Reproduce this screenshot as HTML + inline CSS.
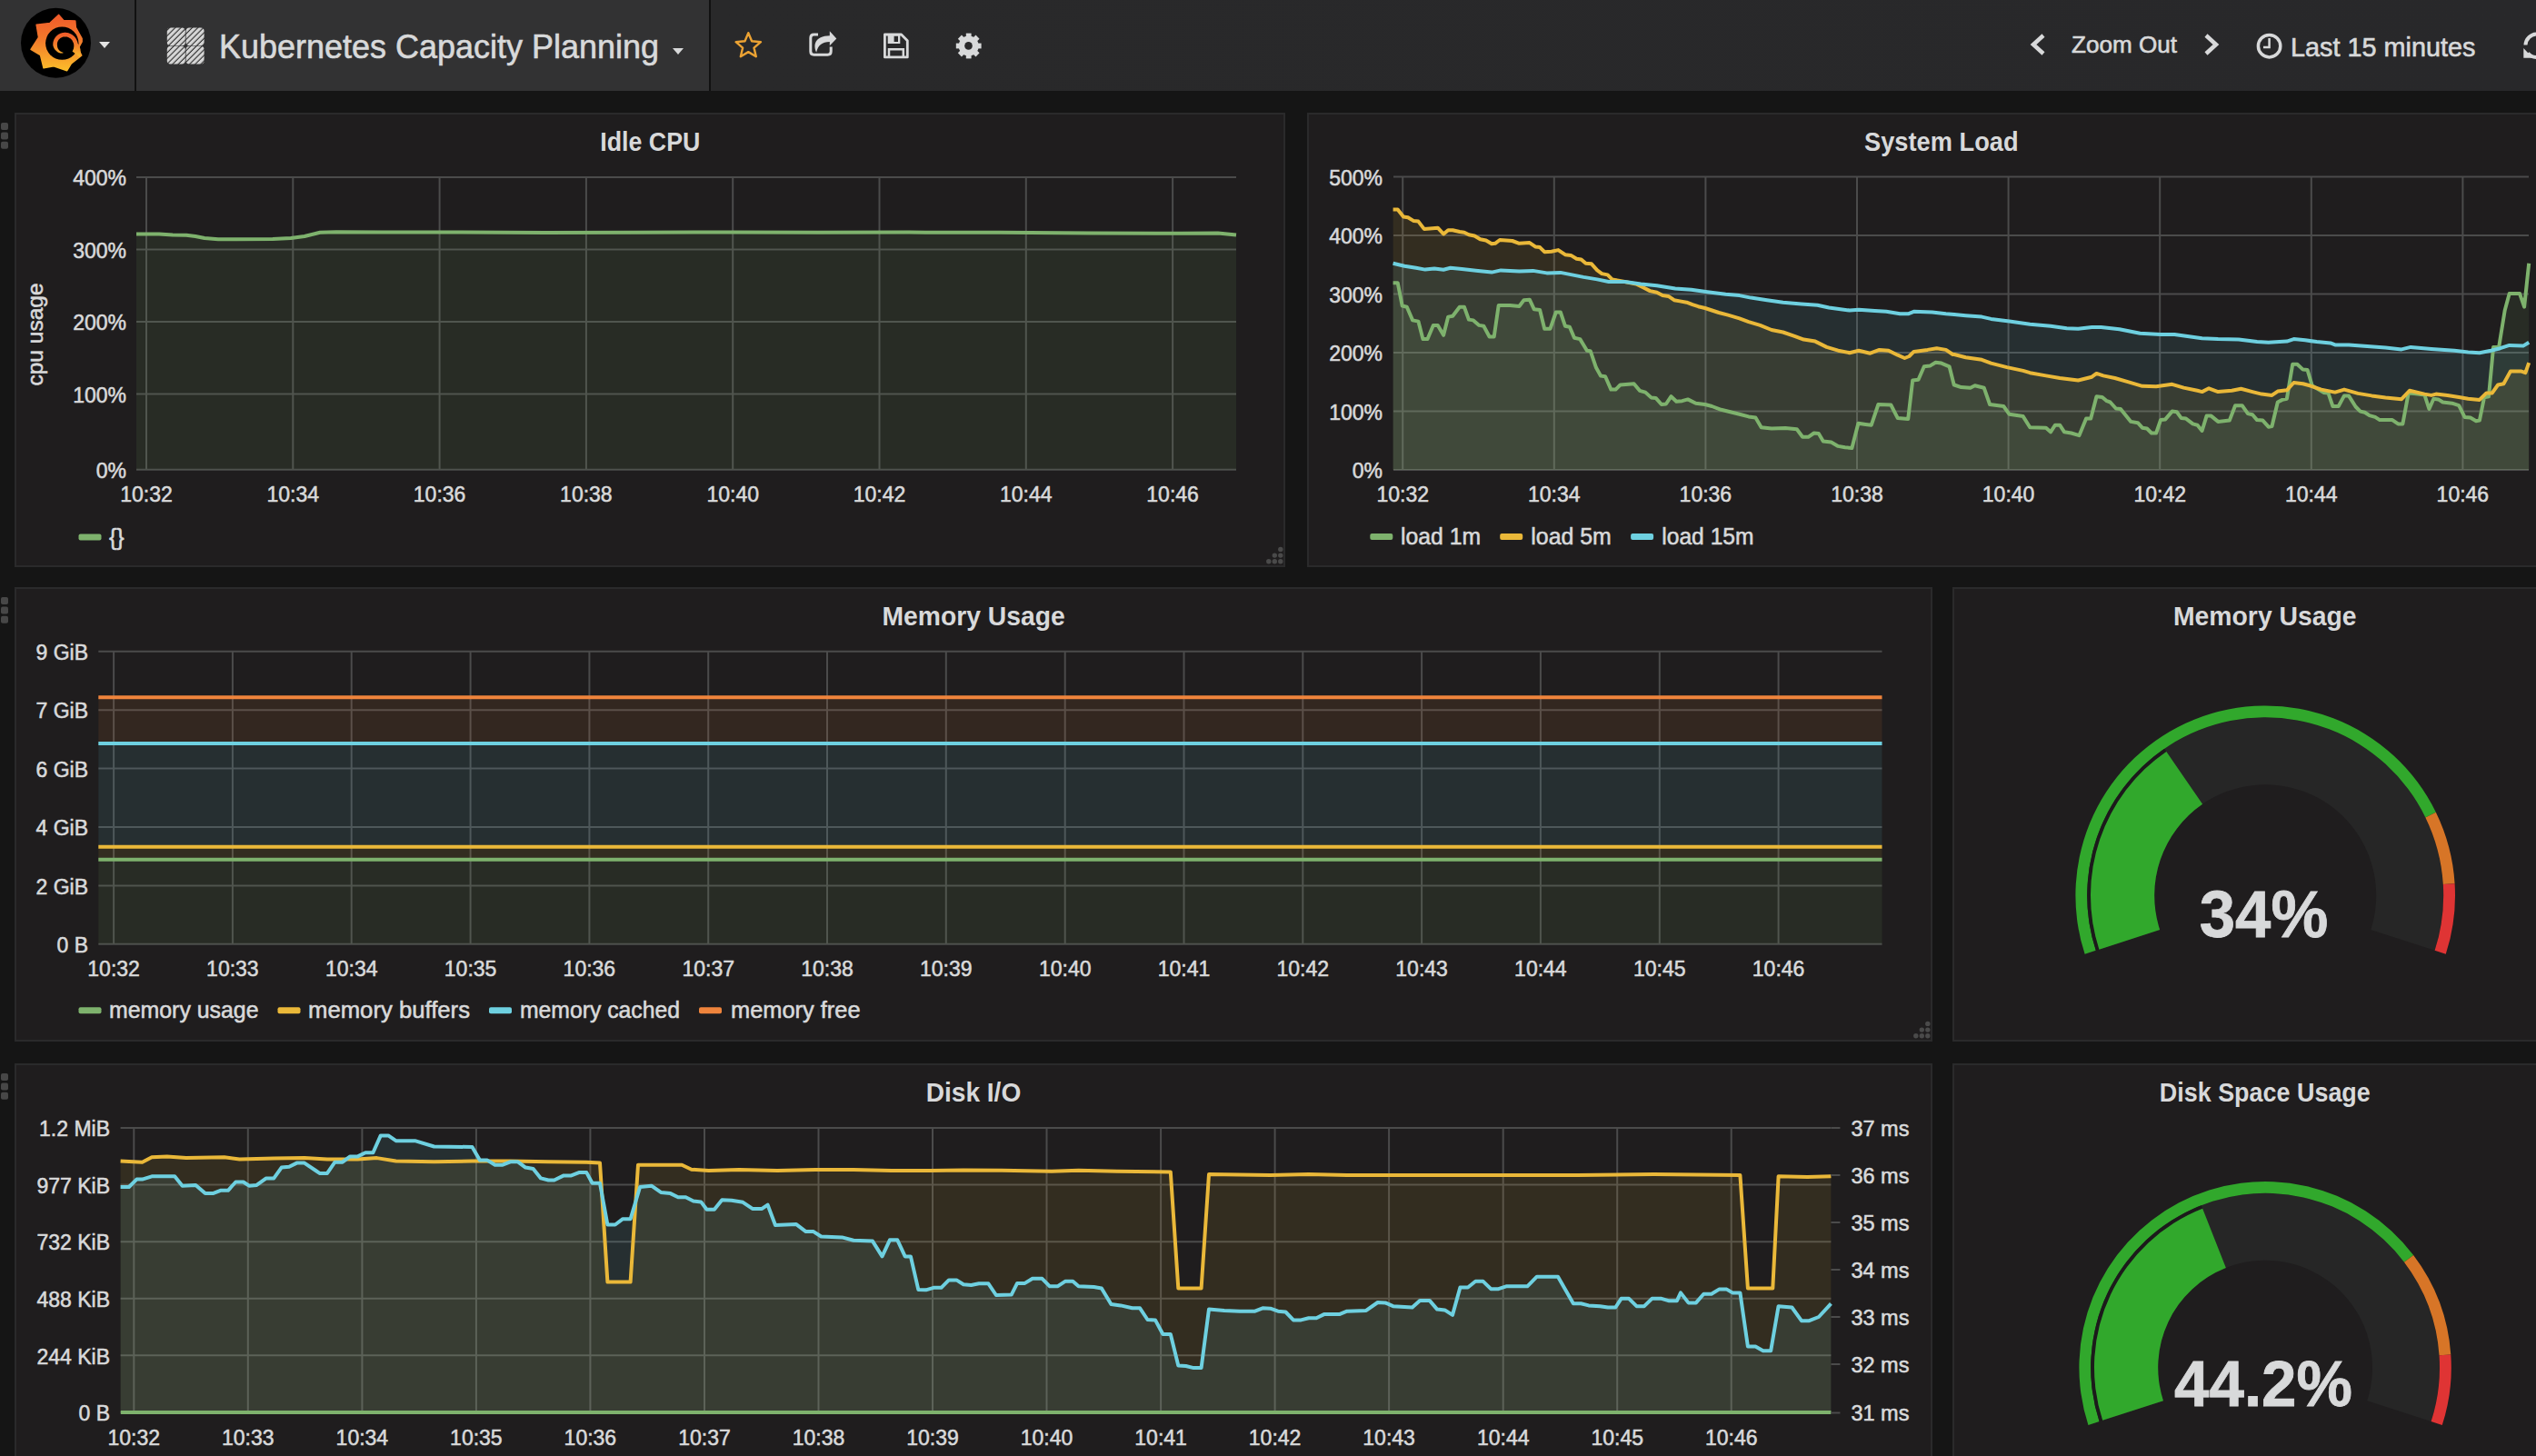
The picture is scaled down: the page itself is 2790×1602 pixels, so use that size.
<!DOCTYPE html>
<html><head><meta charset="utf-8"><title>Kubernetes Capacity Planning</title>
<style>
html,body{margin:0;padding:0;background:#151515;width:2790px;height:1602px;overflow:hidden;}
body{font-family:"Liberation Sans", sans-serif;color:#d8d9da;position:relative;}
.nav{position:absolute;left:0;top:0;width:2790px;height:100px;background:linear-gradient(to right,#323233 0px,#323233 781px,#29292a 781px,#28282a 2790px);}
.t{position:absolute;white-space:nowrap;font-family:"Liberation Sans", sans-serif;color:#d8d9da;}
svg{position:absolute;left:0;top:0;}
svg text{font-family:"Liberation Sans", sans-serif;}
</style></head><body>
<div class="nav"></div>
<svg width="2790" height="100" viewBox="0 0 2790 100">
<defs><linearGradient id="lg" x1="0" y1="0" x2="0" y2="1"><stop offset="0" stop-color="#f05a2a"/><stop offset="0.45" stop-color="#f37a2b"/><stop offset="1" stop-color="#fbbd2a"/></linearGradient></defs>
<circle cx="61.5" cy="47.3" r="38.5" fill="#000"/>
<path d="M64.7,16.4 L69.9,22.5 L82.8,23.1 L83.3,30.1 L90.1,42.4 L90.1,45.9 L86.0,53.5 L89.8,61.0 L78.4,69.8 L73.7,77.7 L59.1,72.7 L48.0,74.8 L44.5,60.5 L34.0,54.3 L42.5,41.2 L40.1,27.2 L55.0,25.4 Z" fill="url(#lg)" stroke="url(#lg)" stroke-width="1.5" stroke-linejoin="round"/>
<circle cx="68.3" cy="47.6" r="18.2" fill="#000"/>
<path d="M69.3,58.6 L68.7,58.6 L68.1,58.6 L67.5,58.6 L66.8,58.5 L66.2,58.4 L65.5,58.2 L64.9,57.9 L64.3,57.7 L63.7,57.4 L63.1,57.0 L62.5,56.6 L61.9,56.1 L61.4,55.6 L60.9,55.1 L60.4,54.5 L60.0,53.9 L59.6,53.2 L59.2,52.5 L58.9,51.8 L58.6,51.1 L58.4,50.3 L58.3,49.5 L58.3,48.7 L58.3,47.9 L58.4,47.1 L58.5,46.3 L58.7,45.5 L59.0,44.7 L59.2,43.9 L59.6,43.1 L60.0,42.4 L60.4,41.7 L60.9,41.0 L61.5,40.3 L62.1,39.7 L62.7,39.1 L63.4,38.6 L64.1,38.0 L64.8,37.6 L65.6,37.2 L66.4,36.8 L67.2,36.5 L68.1,36.3 L68.9,36.1 L69.8,35.9 L70.7,35.8 L71.6,35.8 L72.5,35.8 L73.4,35.9 L74.3,36.1 L75.2,36.3 L76.1,36.6 L77.0,36.9 L77.8,37.3 L78.7,37.7 L79.5,38.3 L80.2,38.8 L81.0,39.4 L81.7,40.1 L82.3,40.8 L82.9,41.5 L83.5,42.3 L84.0,43.2 L84.4,44.0 L84.8,44.9 L85.1,45.8 L85.4,46.8 L85.6,47.8 L86.3,48.7 L86.9,49.7 L87.4,50.8 L87.8,52.0 L88.2,53.3 L88.5,54.6 L88.6,55.9 L88.7,57.3 L88.6,58.7 L88.5,60.1 L88.2,61.6 L87.9,63.1 L79.5,56.6 L79.9,55.9 L80.2,55.3 L80.5,54.6 L80.8,53.9 L81.0,53.2 L81.1,52.5 L81.2,51.8 L81.3,51.1 L81.3,50.4 L81.3,49.7 L81.2,49.0 L81.1,48.3 L80.9,47.6 L80.7,47.0 L80.4,46.4 L80.1,45.7 L79.8,45.2 L79.5,44.6 L79.1,44.1 L78.6,43.6 L78.2,43.1 L77.7,42.6 L77.2,42.2 L76.6,41.9 L76.1,41.6 L75.5,41.3 L74.9,41.0 L74.3,40.8 L73.7,40.6 L73.1,40.5 L72.5,40.4 L71.9,40.4 L71.3,40.4 L70.7,40.4 L70.1,40.5 L69.5,40.6 L68.9,40.8 L68.4,41.0 L67.8,41.2 L67.3,41.4 L66.8,41.7 L66.3,42.0 L65.9,42.4 L65.5,42.8 L65.1,43.2 L64.7,43.6 L64.4,44.0 L64.1,44.5 L63.8,45.0 L63.6,45.5 L63.4,45.9 L63.2,46.5 L63.1,47.0 L63.0,47.5 L62.9,48.0 L62.9,48.5 L62.9,49.0 L62.9,49.5 L63.0,50.0 L63.0,50.5 L63.1,51.0 L63.1,51.5 L63.3,52.0 L63.4,52.5 L63.6,53.0 L63.8,53.4 L64.1,53.9 L64.3,54.3 L64.6,54.7 L65.0,55.1 L65.3,55.5 L65.7,55.9 L66.1,56.2 L66.5,56.5 L67.0,56.8 L67.5,57.0 L67.9,57.2 L68.4,57.4 L68.9,57.6 L69.5,57.7 Z" fill="url(#lg)"/>
<path d="M109,46 L121,46 L115,53 Z" fill="#e3e3e3"/>
<rect x="148" y="0" width="2" height="100" fill="#111"/>
<rect x="780" y="0" width="2" height="100" fill="#111"/>
<defs><pattern id="hatch" width="4.4" height="4.4" patternUnits="userSpaceOnUse" patternTransform="rotate(45)"><rect width="4.4" height="4.4" fill="#2a2a2a"/><rect width="3.3" height="4.4" fill="#d6d6d6"/></pattern></defs>
<rect x="183.8" y="30.5" width="20" height="19.7" rx="3.8" fill="url(#hatch)"/>
<rect x="204.6" y="30.5" width="20" height="19.7" rx="3.8" fill="url(#hatch)"/>
<rect x="183.8" y="50.8" width="20" height="19.7" rx="3.8" fill="url(#hatch)"/>
<rect x="204.6" y="50.8" width="20" height="19.7" rx="3.8" fill="url(#hatch)"/>
<path d="M740,53 L752,53 L746,60 Z" fill="#d8d9da"/>
<path d="M823.3,36.2 L827.1,45.3 L837.0,46.2 L829.5,52.6 L831.8,62.2 L823.3,57.1 L814.8,62.2 L817.1,52.6 L809.6,46.2 L819.5,45.3 Z" fill="none" stroke="#eba233" stroke-width="2.4" stroke-linejoin="round"/>
<path d="M900,38.1 L895.5,38.1 Q891.8,38.1 891.8,41.8 L891.8,56.6 Q891.8,60.3 895.5,60.3 L910.5,60.3 Q914.2,60.3 914.2,56.6 L914.2,51.6" fill="none" stroke="#d8d9da" stroke-width="3"/>
<path d="M898.2,57.6 C894.6,50 895.8,39.6 912.8,39.2 L912.8,34.2 L920.3,42.4 L912.8,50.2 L912.8,46 C904.5,46 899.8,50 898.2,57.6 Z" fill="#d8d9da"/>
<path d="M973.4,38 L991.6,38 L998.3,44.7 L998.3,62.9 L973.4,62.9 Z" fill="none" stroke="#d8d9da" stroke-width="2.8" stroke-linejoin="round"/>
<path d="M976.7,38.5 L990.3,38.5 L990.3,48 L976.7,48 Z M983.6,39.4 L983.6,46 L988,46 L988,39.4 Z" fill="#d8d9da" fill-rule="evenodd"/>
<path d="M978,62.9 L978,54.3 L993.8,54.3 L993.8,62.9" fill="none" stroke="#d8d9da" stroke-width="2.5"/>
<circle cx="1065.7" cy="50.5" r="11" fill="#d8d9da"/>
<rect x="1062.80" y="36.60" width="5.8" height="13.9" fill="#d8d9da" transform="rotate(0 1065.7 50.5)"/>
<rect x="1062.80" y="36.60" width="5.8" height="13.9" fill="#d8d9da" transform="rotate(45 1065.7 50.5)"/>
<rect x="1062.80" y="36.60" width="5.8" height="13.9" fill="#d8d9da" transform="rotate(90 1065.7 50.5)"/>
<rect x="1062.80" y="36.60" width="5.8" height="13.9" fill="#d8d9da" transform="rotate(135 1065.7 50.5)"/>
<rect x="1062.80" y="36.60" width="5.8" height="13.9" fill="#d8d9da" transform="rotate(180 1065.7 50.5)"/>
<rect x="1062.80" y="36.60" width="5.8" height="13.9" fill="#d8d9da" transform="rotate(225 1065.7 50.5)"/>
<rect x="1062.80" y="36.60" width="5.8" height="13.9" fill="#d8d9da" transform="rotate(270 1065.7 50.5)"/>
<rect x="1062.80" y="36.60" width="5.8" height="13.9" fill="#d8d9da" transform="rotate(315 1065.7 50.5)"/>
<circle cx="1065.5" cy="50.4" r="4.3" fill="#29292a"/>
<path d="M2248,39 L2237,49 L2248,59" fill="none" stroke="#d8d9da" stroke-width="4.5"/>
<path d="M2427,39 L2438,49 L2427,59" fill="none" stroke="#d8d9da" stroke-width="4.5"/>
<circle cx="2496.6" cy="50.7" r="12.2" fill="none" stroke="#d8d9da" stroke-width="3.5"/>
<path d="M2496.6,42 L2496.6,52 L2490,52" fill="none" stroke="#d8d9da" stroke-width="2.5"/>
<path d="M2778.5,49.5 A12.5,12.5 0 0 1 2791,37.5" fill="none" stroke="#d8d9da" stroke-width="4"/>
<path d="M2776.3,53 L2776.3,63.8 L2786.5,63.8 Z" fill="#d8d9da"/>
<path d="M2781,58.5 A12.5,12.5 0 0 0 2791,63" fill="none" stroke="#d8d9da" stroke-width="4"/>
<text x="241" y="63.8" font-size="36" fill="#d8d9da" stroke="#d8d9da" stroke-width="0.6" textLength="484" lengthAdjust="spacingAndGlyphs">Kubernetes Capacity Planning</text>
<text x="2279" y="58.4" font-size="26" fill="#d8d9da" stroke="#d8d9da" stroke-width="0.6" textLength="116" lengthAdjust="spacingAndGlyphs">Zoom Out</text>
<text x="2520" y="62.3" font-size="28.8" fill="#d8d9da" stroke="#d8d9da" stroke-width="0.6" textLength="203.5" lengthAdjust="spacingAndGlyphs">Last 15 minutes</text>
</svg>
<svg width="2790" height="1502" viewBox="0 100 2790 1502" style="top:100px">
<rect x="17" y="125" width="1396" height="498" fill="#1f1d1e" stroke="#2a2a2b" stroke-width="2"/>
<rect x="1439" y="125" width="1420" height="498" fill="#1f1d1e" stroke="#2a2a2b" stroke-width="2"/>
<rect x="17" y="647" width="2108" height="498" fill="#1f1d1e" stroke="#2a2a2b" stroke-width="2"/>
<rect x="2149" y="647" width="690" height="498" fill="#1f1d1e" stroke="#2a2a2b" stroke-width="2"/>
<rect x="17" y="1171" width="2108" height="528" fill="#1f1d1e" stroke="#2a2a2b" stroke-width="2"/>
<rect x="2149" y="1171" width="690" height="528" fill="#1f1d1e" stroke="#2a2a2b" stroke-width="2"/>
<rect x="1" y="135.0" width="8" height="8" rx="2" fill="#474747"/>
<rect x="1" y="145.4" width="8" height="8" rx="2" fill="#474747"/>
<rect x="1" y="155.8" width="8" height="8" rx="2" fill="#474747"/>
<rect x="1" y="657.0" width="8" height="8" rx="2" fill="#474747"/>
<rect x="1" y="667.4" width="8" height="8" rx="2" fill="#474747"/>
<rect x="1" y="677.8" width="8" height="8" rx="2" fill="#474747"/>
<rect x="1" y="1181.0" width="8" height="8" rx="2" fill="#474747"/>
<rect x="1" y="1191.4" width="8" height="8" rx="2" fill="#474747"/>
<rect x="1" y="1201.8" width="8" height="8" rx="2" fill="#474747"/>
<circle cx="1408.8" cy="617.8" r="2.7" fill="#4a4a4a"/>
<circle cx="1402.3" cy="617.8" r="2.7" fill="#4a4a4a"/>
<circle cx="1395.8" cy="617.8" r="2.7" fill="#4a4a4a"/>
<circle cx="1408.8" cy="611.1" r="2.7" fill="#4a4a4a"/>
<circle cx="1402.3" cy="611.1" r="2.7" fill="#4a4a4a"/>
<circle cx="1408.8" cy="604.4" r="2.7" fill="#4a4a4a"/>
<circle cx="2120.8" cy="1139.8" r="2.7" fill="#4a4a4a"/>
<circle cx="2114.3" cy="1139.8" r="2.7" fill="#4a4a4a"/>
<circle cx="2107.8" cy="1139.8" r="2.7" fill="#4a4a4a"/>
<circle cx="2120.8" cy="1133.1" r="2.7" fill="#4a4a4a"/>
<circle cx="2114.3" cy="1133.1" r="2.7" fill="#4a4a4a"/>
<circle cx="2120.8" cy="1126.4" r="2.7" fill="#4a4a4a"/>
<text x="715.3" y="166.0" font-size="29" text-anchor="middle" font-weight="700" fill="#d8d9da" textLength="110" lengthAdjust="spacingAndGlyphs">Idle CPU</text>
<text x="2135.8" y="166.0" font-size="29" text-anchor="middle" font-weight="700" fill="#d8d9da" textLength="169.6" lengthAdjust="spacingAndGlyphs">System Load</text>
<text x="1071.1" y="688.0" font-size="29" text-anchor="middle" font-weight="700" fill="#d8d9da" textLength="201.3" lengthAdjust="spacingAndGlyphs">Memory Usage</text>
<text x="2491.8" y="688.0" font-size="29" text-anchor="middle" font-weight="700" fill="#d8d9da" textLength="201.6" lengthAdjust="spacingAndGlyphs">Memory Usage</text>
<text x="1071.0" y="1212.0" font-size="29" text-anchor="middle" font-weight="700" fill="#d8d9da" textLength="104.6" lengthAdjust="spacingAndGlyphs">Disk I/O</text>
<text x="2491.8" y="1212.0" font-size="29" text-anchor="middle" font-weight="700" fill="#d8d9da" textLength="232" lengthAdjust="spacingAndGlyphs">Disk Space Usage</text>
<line x1="150" y1="195.0" x2="1360" y2="195.0" stroke="#4b4b4b" stroke-width="2"/>
<line x1="150" y1="274.5" x2="1360" y2="274.5" stroke="#4b4b4b" stroke-width="2"/>
<line x1="150" y1="354.0" x2="1360" y2="354.0" stroke="#4b4b4b" stroke-width="2"/>
<line x1="150" y1="433.5" x2="1360" y2="433.5" stroke="#4b4b4b" stroke-width="2"/>
<line x1="150" y1="516.8" x2="1360" y2="516.8" stroke="#4b4b4b" stroke-width="2"/>
<line x1="161.0" y1="195.0" x2="161.0" y2="516.8" stroke="#4b4b4b" stroke-width="2"/>
<line x1="322.3" y1="195.0" x2="322.3" y2="516.8" stroke="#4b4b4b" stroke-width="2"/>
<line x1="483.6" y1="195.0" x2="483.6" y2="516.8" stroke="#4b4b4b" stroke-width="2"/>
<line x1="644.9" y1="195.0" x2="644.9" y2="516.8" stroke="#4b4b4b" stroke-width="2"/>
<line x1="806.2" y1="195.0" x2="806.2" y2="516.8" stroke="#4b4b4b" stroke-width="2"/>
<line x1="967.5" y1="195.0" x2="967.5" y2="516.8" stroke="#4b4b4b" stroke-width="2"/>
<line x1="1128.8" y1="195.0" x2="1128.8" y2="516.8" stroke="#4b4b4b" stroke-width="2"/>
<line x1="1290.1" y1="195.0" x2="1290.1" y2="516.8" stroke="#4b4b4b" stroke-width="2"/>
<path d="M150.0,257.5 L175.0,257.5 L190.0,258.5 L205.0,258.8 L215.0,260.0 L225.0,262.0 L240.0,263.3 L260.0,263.2 L300.0,263.0 L320.0,262.0 L335.0,260.0 L352.0,255.8 L370.0,255.2 L420.0,255.5 L500.0,255.5 L600.0,256.0 L700.0,255.7 L800.0,255.5 L900.0,255.8 L1000.0,255.6 L1100.0,255.8 L1200.0,256.5 L1300.0,256.8 L1340.0,256.5 L1360.0,258.5 L1360.0,516.8 L150.0,516.8 Z" fill="#7eb26d" fill-opacity="0.1"/>
<path d="M150.0,257.5 L175.0,257.5 L190.0,258.5 L205.0,258.8 L215.0,260.0 L225.0,262.0 L240.0,263.3 L260.0,263.2 L300.0,263.0 L320.0,262.0 L335.0,260.0 L352.0,255.8 L370.0,255.2 L420.0,255.5 L500.0,255.5 L600.0,256.0 L700.0,255.7 L800.0,255.5 L900.0,255.8 L1000.0,255.6 L1100.0,255.8 L1200.0,256.5 L1300.0,256.8 L1340.0,256.5 L1360.0,258.5" fill="none" stroke="#7eb26d" stroke-width="4" stroke-linejoin="round"/>
<text x="139.0" y="204.2" font-size="23" text-anchor="end" font-weight="400" fill="#d8d9da" stroke="#d8d9da" stroke-width="0.55" >400%</text>
<text x="139.0" y="283.7" font-size="23" text-anchor="end" font-weight="400" fill="#d8d9da" stroke="#d8d9da" stroke-width="0.55" >300%</text>
<text x="139.0" y="363.2" font-size="23" text-anchor="end" font-weight="400" fill="#d8d9da" stroke="#d8d9da" stroke-width="0.55" >200%</text>
<text x="139.0" y="442.7" font-size="23" text-anchor="end" font-weight="400" fill="#d8d9da" stroke="#d8d9da" stroke-width="0.55" >100%</text>
<text x="139.0" y="526.0" font-size="23" text-anchor="end" font-weight="400" fill="#d8d9da" stroke="#d8d9da" stroke-width="0.55" >0%</text>
<text x="161.0" y="552.0" font-size="23" text-anchor="middle" font-weight="400" fill="#d8d9da" stroke="#d8d9da" stroke-width="0.55" >10:32</text>
<text x="322.3" y="552.0" font-size="23" text-anchor="middle" font-weight="400" fill="#d8d9da" stroke="#d8d9da" stroke-width="0.55" >10:34</text>
<text x="483.6" y="552.0" font-size="23" text-anchor="middle" font-weight="400" fill="#d8d9da" stroke="#d8d9da" stroke-width="0.55" >10:36</text>
<text x="644.9" y="552.0" font-size="23" text-anchor="middle" font-weight="400" fill="#d8d9da" stroke="#d8d9da" stroke-width="0.55" >10:38</text>
<text x="806.2" y="552.0" font-size="23" text-anchor="middle" font-weight="400" fill="#d8d9da" stroke="#d8d9da" stroke-width="0.55" >10:40</text>
<text x="967.5" y="552.0" font-size="23" text-anchor="middle" font-weight="400" fill="#d8d9da" stroke="#d8d9da" stroke-width="0.55" >10:42</text>
<text x="1128.8" y="552.0" font-size="23" text-anchor="middle" font-weight="400" fill="#d8d9da" stroke="#d8d9da" stroke-width="0.55" >10:44</text>
<text x="1290.1" y="552.0" font-size="23" text-anchor="middle" font-weight="400" fill="#d8d9da" stroke="#d8d9da" stroke-width="0.55" >10:46</text>
<text x="38.5" y="368.0" font-size="24.5" text-anchor="middle" font-weight="400" fill="#d8d9da" stroke="#d8d9da" stroke-width="0.55" transform="rotate(-90 38.5 368)" dy="8">cpu usage</text>
<rect x="86.5" y="587.5" width="25" height="7" rx="2" fill="#7eb26d"/>
<text x="120.0" y="599.5" font-size="25" text-anchor="start" font-weight="400" fill="#d8d9da" stroke="#d8d9da" stroke-width="0.55" >{}</text>
<line x1="1533" y1="194.6" x2="2782" y2="194.6" stroke="#4b4b4b" stroke-width="2"/>
<line x1="1533" y1="259.1" x2="2782" y2="259.1" stroke="#4b4b4b" stroke-width="2"/>
<line x1="1533" y1="323.6" x2="2782" y2="323.6" stroke="#4b4b4b" stroke-width="2"/>
<line x1="1533" y1="388.1" x2="2782" y2="388.1" stroke="#4b4b4b" stroke-width="2"/>
<line x1="1533" y1="452.5" x2="2782" y2="452.5" stroke="#4b4b4b" stroke-width="2"/>
<line x1="1533" y1="517.0" x2="2782" y2="517.0" stroke="#4b4b4b" stroke-width="2"/>
<line x1="1543.2" y1="194.6" x2="1543.2" y2="517.0" stroke="#4b4b4b" stroke-width="2"/>
<line x1="1709.8" y1="194.6" x2="1709.8" y2="517.0" stroke="#4b4b4b" stroke-width="2"/>
<line x1="1876.4" y1="194.6" x2="1876.4" y2="517.0" stroke="#4b4b4b" stroke-width="2"/>
<line x1="2043.0" y1="194.6" x2="2043.0" y2="517.0" stroke="#4b4b4b" stroke-width="2"/>
<line x1="2209.6" y1="194.6" x2="2209.6" y2="517.0" stroke="#4b4b4b" stroke-width="2"/>
<line x1="2376.2" y1="194.6" x2="2376.2" y2="517.0" stroke="#4b4b4b" stroke-width="2"/>
<line x1="2542.8" y1="194.6" x2="2542.8" y2="517.0" stroke="#4b4b4b" stroke-width="2"/>
<line x1="2709.4" y1="194.6" x2="2709.4" y2="517.0" stroke="#4b4b4b" stroke-width="2"/>
<path d="M1532.6,311.2 L1537.7,311.2 L1542.7,336.5 L1547.8,337.7 L1554.1,352.4 L1560.4,353.6 L1565.4,373.1 L1570.5,373.1 L1576.8,357.9 L1581.8,357.9 L1588.1,368.8 L1593.2,348.6 L1598.2,347.8 L1605.8,337.7 L1610.9,337.7 L1615.9,351.6 L1620.9,352.4 L1627.3,357.9 L1632.3,358.7 L1638.6,370.5 L1643.7,370.5 L1648.7,336.0 L1661.3,336.0 L1671.4,337.0 L1676.5,330.2 L1682.8,329.7 L1687.8,340.3 L1694.1,341.0 L1699.2,361.7 L1705.5,361.7 L1711.8,343.5 L1716.8,343.5 L1721.9,358.7 L1726.9,359.7 L1732.0,371.8 L1738.3,373.1 L1745.9,385.7 L1749.7,386.2 L1756.0,404.6 L1761.0,413.4 L1766.1,414.2 L1772.4,428.6 L1777.4,428.6 L1782.5,423.5 L1797.6,422.3 L1803.9,429.8 L1810.2,431.6 L1816.5,437.4 L1821.6,437.9 L1827.9,445.0 L1832.9,444.5 L1838.5,436.2 L1844.3,441.7 L1850.6,441.2 L1856.9,439.4 L1865.7,443.7 L1875.8,445.0 L1883.4,447.0 L1893.5,450.8 L1903.6,453.3 L1913.7,455.8 L1923.8,458.4 L1931.4,459.6 L1937.7,470.2 L1949.0,471.5 L1964.2,471.0 L1976.8,472.2 L1983.1,480.8 L1989.4,480.8 L1995.7,476.5 L2000.8,477.0 L2005.8,485.4 L2014.6,486.6 L2022.2,490.9 L2029.8,492.2 L2037.4,492.9 L2044.4,465.7 L2052.5,466.9 L2058.8,467.7 L2066.4,445.0 L2080.3,445.5 L2087.8,460.1 L2099.2,460.9 L2104.2,418.5 L2110.5,417.7 L2116.8,403.3 L2123.2,402.6 L2129.5,398.8 L2135.8,399.6 L2144.6,403.3 L2149.7,423.5 L2150.0,423.5 L2157.6,426.1 L2167.7,426.8 L2172.7,424.3 L2182.8,426.8 L2189.1,445.0 L2204.3,447.0 L2210.6,455.8 L2225.7,458.1 L2233.3,470.2 L2250.9,470.7 L2256.0,475.3 L2261.0,467.7 L2266.1,467.7 L2271.1,475.3 L2278.7,476.5 L2287.5,479.1 L2295.1,460.6 L2300.2,460.6 L2306.5,436.2 L2312.8,436.9 L2317.8,441.2 L2321.6,442.5 L2327.9,449.5 L2333.0,450.0 L2344.3,463.9 L2351.9,465.2 L2356.9,470.7 L2362.0,471.5 L2367.0,476.5 L2372.1,476.5 L2377.1,461.9 L2382.2,461.4 L2389.7,452.6 L2394.8,453.3 L2399.8,460.1 L2404.9,460.6 L2412.5,466.4 L2417.5,467.7 L2422.6,474.0 L2427.6,457.6 L2432.6,457.6 L2440.2,463.9 L2452.8,462.6 L2459.1,446.2 L2466.7,446.2 L2473.0,455.1 L2478.1,456.3 L2483.1,462.1 L2489.4,462.6 L2495.7,469.7 L2499.5,469.0 L2505.8,442.5 L2510.9,439.9 L2515.9,438.7 L2522.2,400.8 L2527.3,400.8 L2533.6,406.6 L2538.6,407.1 L2543.7,424.3 L2556.3,431.9 L2561.4,432.4 L2566.4,447.0 L2572.7,447.0 L2579.0,435.4 L2584.1,435.6 L2591.6,447.5 L2596.7,452.6 L2601.7,453.8 L2606.8,457.1 L2613.1,458.9 L2618.1,462.1 L2632.0,462.1 L2638.3,466.4 L2643.4,466.4 L2649.7,432.4 L2656.0,433.1 L2667.4,434.4 L2672.4,450.0 L2677.4,438.7 L2682.5,439.4 L2687.5,442.5 L2697.6,443.7 L2705.2,446.2 L2711.5,458.9 L2717.8,459.6 L2724.1,463.2 L2727.9,462.6 L2733.0,437.4 L2738.0,436.2 L2743.1,381.9 L2749.4,380.6 L2755.7,341.5 L2760.7,323.1 L2772.1,323.1 L2777.1,337.7 L2782.2,289.8 L2782.2,517.0 L1532.6,517.0 Z" fill="#7eb26d" fill-opacity="0.1"/>
<path d="M1532.6,230.5 L1537.7,230.5 L1544.0,238.5 L1549.0,239.3 L1555.3,243.1 L1560.4,243.6 L1566.7,251.9 L1573.0,251.4 L1581.8,250.7 L1588.1,257.5 L1593.2,253.2 L1598.2,253.2 L1605.8,255.0 L1610.9,255.7 L1615.9,258.2 L1622.2,259.5 L1628.5,263.3 L1634.8,264.5 L1641.1,268.3 L1644.9,267.8 L1650.0,264.0 L1663.8,265.0 L1671.4,267.8 L1682.8,267.1 L1689.1,271.4 L1694.1,272.1 L1699.2,277.2 L1706.8,276.7 L1714.3,275.1 L1721.9,280.2 L1728.2,280.9 L1734.5,284.7 L1739.6,285.5 L1744.6,289.8 L1750.9,290.3 L1757.2,297.4 L1762.3,301.1 L1768.6,302.4 L1773.6,307.4 L1787.5,310.0 L1800.1,312.5 L1807.7,316.3 L1815.3,320.1 L1822.8,321.8 L1829.1,325.1 L1835.5,325.9 L1841.8,330.2 L1848.1,331.4 L1855.6,332.7 L1862.0,335.2 L1868.3,337.2 L1875.8,339.0 L1883.4,341.5 L1891.0,344.0 L1901.1,346.6 L1913.7,350.3 L1923.8,354.1 L1936.4,357.9 L1949.0,363.0 L1961.6,365.5 L1974.3,369.8 L1984.4,373.6 L1997.0,375.6 L2009.6,381.9 L2022.2,385.7 L2034.8,388.2 L2044.9,385.7 L2057.5,388.7 L2067.6,384.9 L2077.7,385.7 L2087.8,390.7 L2095.4,394.0 L2100.4,392.0 L2105.5,386.9 L2120.6,384.9 L2130.7,383.2 L2140.8,384.9 L2148.4,390.0 L2150.0,390.0 L2162.6,393.2 L2180.3,395.8 L2190.4,399.6 L2208.0,404.1 L2225.7,407.9 L2233.3,410.2 L2250.9,413.4 L2266.1,416.0 L2276.2,417.2 L2286.3,418.5 L2296.4,416.0 L2301.4,414.7 L2306.5,410.9 L2314.0,413.4 L2326.7,416.0 L2341.8,420.3 L2356.9,424.8 L2372.1,425.3 L2389.7,422.8 L2402.4,426.6 L2417.5,429.8 L2422.6,431.1 L2430.1,427.3 L2440.2,431.1 L2455.4,429.8 L2465.5,427.8 L2478.1,431.1 L2488.2,433.6 L2499.5,434.9 L2505.8,430.6 L2515.9,429.3 L2523.5,421.0 L2533.6,422.3 L2541.2,424.3 L2553.8,428.6 L2568.9,431.6 L2579.0,428.6 L2594.2,432.9 L2609.3,435.4 L2624.4,437.4 L2642.1,439.2 L2650.9,429.8 L2667.4,433.6 L2674.9,434.9 L2680.0,433.6 L2692.6,434.9 L2705.2,436.9 L2715.3,438.7 L2727.9,439.9 L2735.5,432.4 L2741.8,432.4 L2748.1,423.5 L2754.4,422.3 L2762.0,408.4 L2773.3,408.4 L2778.4,410.2 L2782.2,399.1 L2782.2,517.0 L1532.6,517.0 Z" fill="#eab839" fill-opacity="0.1"/>
<path d="M1532.6,289.8 L1545.2,292.8 L1557.9,294.8 L1567.9,296.6 L1578.0,295.6 L1588.1,296.8 L1595.7,294.8 L1608.3,296.1 L1626.0,297.9 L1641.1,299.6 L1651.2,297.4 L1671.4,298.6 L1686.6,297.9 L1701.7,300.4 L1716.8,299.9 L1729.5,302.4 L1742.1,304.9 L1757.2,307.4 L1769.8,310.0 L1787.5,310.0 L1805.2,312.5 L1822.8,314.3 L1843.0,317.5 L1860.7,318.8 L1878.4,321.3 L1898.5,323.8 L1913.7,325.1 L1926.3,327.6 L1944.0,330.2 L1961.6,332.7 L1981.8,334.4 L1999.5,335.7 L2012.1,338.5 L2034.8,341.5 L2044.9,340.8 L2062.6,342.0 L2075.2,342.8 L2090.3,345.3 L2099.2,345.3 L2105.5,342.8 L2125.7,343.5 L2140.8,345.3 L2150.0,346.1 L2162.6,347.3 L2180.3,348.6 L2190.4,350.9 L2210.6,353.6 L2233.3,356.7 L2256.0,358.7 L2273.7,361.2 L2286.3,361.7 L2301.4,359.9 L2311.5,359.9 L2331.7,362.2 L2354.4,366.8 L2377.1,368.0 L2392.3,368.0 L2422.6,372.3 L2440.2,373.1 L2462.9,373.6 L2483.1,376.1 L2495.7,376.8 L2515.9,375.6 L2523.5,373.1 L2536.1,374.3 L2548.7,376.1 L2563.9,377.4 L2568.9,379.4 L2584.1,379.4 L2604.3,381.1 L2624.4,382.6 L2642.1,384.4 L2652.2,381.9 L2674.9,383.9 L2700.2,385.7 L2715.3,387.4 L2727.9,388.2 L2740.5,385.7 L2750.6,383.2 L2760.7,379.9 L2775.9,380.6 L2782.2,376.8 L2782.2,517.0 L1532.6,517.0 Z" fill="#6ed0e0" fill-opacity="0.1"/>
<path d="M1532.6,311.2 L1537.7,311.2 L1542.7,336.5 L1547.8,337.7 L1554.1,352.4 L1560.4,353.6 L1565.4,373.1 L1570.5,373.1 L1576.8,357.9 L1581.8,357.9 L1588.1,368.8 L1593.2,348.6 L1598.2,347.8 L1605.8,337.7 L1610.9,337.7 L1615.9,351.6 L1620.9,352.4 L1627.3,357.9 L1632.3,358.7 L1638.6,370.5 L1643.7,370.5 L1648.7,336.0 L1661.3,336.0 L1671.4,337.0 L1676.5,330.2 L1682.8,329.7 L1687.8,340.3 L1694.1,341.0 L1699.2,361.7 L1705.5,361.7 L1711.8,343.5 L1716.8,343.5 L1721.9,358.7 L1726.9,359.7 L1732.0,371.8 L1738.3,373.1 L1745.9,385.7 L1749.7,386.2 L1756.0,404.6 L1761.0,413.4 L1766.1,414.2 L1772.4,428.6 L1777.4,428.6 L1782.5,423.5 L1797.6,422.3 L1803.9,429.8 L1810.2,431.6 L1816.5,437.4 L1821.6,437.9 L1827.9,445.0 L1832.9,444.5 L1838.5,436.2 L1844.3,441.7 L1850.6,441.2 L1856.9,439.4 L1865.7,443.7 L1875.8,445.0 L1883.4,447.0 L1893.5,450.8 L1903.6,453.3 L1913.7,455.8 L1923.8,458.4 L1931.4,459.6 L1937.7,470.2 L1949.0,471.5 L1964.2,471.0 L1976.8,472.2 L1983.1,480.8 L1989.4,480.8 L1995.7,476.5 L2000.8,477.0 L2005.8,485.4 L2014.6,486.6 L2022.2,490.9 L2029.8,492.2 L2037.4,492.9 L2044.4,465.7 L2052.5,466.9 L2058.8,467.7 L2066.4,445.0 L2080.3,445.5 L2087.8,460.1 L2099.2,460.9 L2104.2,418.5 L2110.5,417.7 L2116.8,403.3 L2123.2,402.6 L2129.5,398.8 L2135.8,399.6 L2144.6,403.3 L2149.7,423.5 L2150.0,423.5 L2157.6,426.1 L2167.7,426.8 L2172.7,424.3 L2182.8,426.8 L2189.1,445.0 L2204.3,447.0 L2210.6,455.8 L2225.7,458.1 L2233.3,470.2 L2250.9,470.7 L2256.0,475.3 L2261.0,467.7 L2266.1,467.7 L2271.1,475.3 L2278.7,476.5 L2287.5,479.1 L2295.1,460.6 L2300.2,460.6 L2306.5,436.2 L2312.8,436.9 L2317.8,441.2 L2321.6,442.5 L2327.9,449.5 L2333.0,450.0 L2344.3,463.9 L2351.9,465.2 L2356.9,470.7 L2362.0,471.5 L2367.0,476.5 L2372.1,476.5 L2377.1,461.9 L2382.2,461.4 L2389.7,452.6 L2394.8,453.3 L2399.8,460.1 L2404.9,460.6 L2412.5,466.4 L2417.5,467.7 L2422.6,474.0 L2427.6,457.6 L2432.6,457.6 L2440.2,463.9 L2452.8,462.6 L2459.1,446.2 L2466.7,446.2 L2473.0,455.1 L2478.1,456.3 L2483.1,462.1 L2489.4,462.6 L2495.7,469.7 L2499.5,469.0 L2505.8,442.5 L2510.9,439.9 L2515.9,438.7 L2522.2,400.8 L2527.3,400.8 L2533.6,406.6 L2538.6,407.1 L2543.7,424.3 L2556.3,431.9 L2561.4,432.4 L2566.4,447.0 L2572.7,447.0 L2579.0,435.4 L2584.1,435.6 L2591.6,447.5 L2596.7,452.6 L2601.7,453.8 L2606.8,457.1 L2613.1,458.9 L2618.1,462.1 L2632.0,462.1 L2638.3,466.4 L2643.4,466.4 L2649.7,432.4 L2656.0,433.1 L2667.4,434.4 L2672.4,450.0 L2677.4,438.7 L2682.5,439.4 L2687.5,442.5 L2697.6,443.7 L2705.2,446.2 L2711.5,458.9 L2717.8,459.6 L2724.1,463.2 L2727.9,462.6 L2733.0,437.4 L2738.0,436.2 L2743.1,381.9 L2749.4,380.6 L2755.7,341.5 L2760.7,323.1 L2772.1,323.1 L2777.1,337.7 L2782.2,289.8" fill="none" stroke="#7eb26d" stroke-width="4" stroke-linejoin="round"/>
<path d="M1532.6,230.5 L1537.7,230.5 L1544.0,238.5 L1549.0,239.3 L1555.3,243.1 L1560.4,243.6 L1566.7,251.9 L1573.0,251.4 L1581.8,250.7 L1588.1,257.5 L1593.2,253.2 L1598.2,253.2 L1605.8,255.0 L1610.9,255.7 L1615.9,258.2 L1622.2,259.5 L1628.5,263.3 L1634.8,264.5 L1641.1,268.3 L1644.9,267.8 L1650.0,264.0 L1663.8,265.0 L1671.4,267.8 L1682.8,267.1 L1689.1,271.4 L1694.1,272.1 L1699.2,277.2 L1706.8,276.7 L1714.3,275.1 L1721.9,280.2 L1728.2,280.9 L1734.5,284.7 L1739.6,285.5 L1744.6,289.8 L1750.9,290.3 L1757.2,297.4 L1762.3,301.1 L1768.6,302.4 L1773.6,307.4 L1787.5,310.0 L1800.1,312.5 L1807.7,316.3 L1815.3,320.1 L1822.8,321.8 L1829.1,325.1 L1835.5,325.9 L1841.8,330.2 L1848.1,331.4 L1855.6,332.7 L1862.0,335.2 L1868.3,337.2 L1875.8,339.0 L1883.4,341.5 L1891.0,344.0 L1901.1,346.6 L1913.7,350.3 L1923.8,354.1 L1936.4,357.9 L1949.0,363.0 L1961.6,365.5 L1974.3,369.8 L1984.4,373.6 L1997.0,375.6 L2009.6,381.9 L2022.2,385.7 L2034.8,388.2 L2044.9,385.7 L2057.5,388.7 L2067.6,384.9 L2077.7,385.7 L2087.8,390.7 L2095.4,394.0 L2100.4,392.0 L2105.5,386.9 L2120.6,384.9 L2130.7,383.2 L2140.8,384.9 L2148.4,390.0 L2150.0,390.0 L2162.6,393.2 L2180.3,395.8 L2190.4,399.6 L2208.0,404.1 L2225.7,407.9 L2233.3,410.2 L2250.9,413.4 L2266.1,416.0 L2276.2,417.2 L2286.3,418.5 L2296.4,416.0 L2301.4,414.7 L2306.5,410.9 L2314.0,413.4 L2326.7,416.0 L2341.8,420.3 L2356.9,424.8 L2372.1,425.3 L2389.7,422.8 L2402.4,426.6 L2417.5,429.8 L2422.6,431.1 L2430.1,427.3 L2440.2,431.1 L2455.4,429.8 L2465.5,427.8 L2478.1,431.1 L2488.2,433.6 L2499.5,434.9 L2505.8,430.6 L2515.9,429.3 L2523.5,421.0 L2533.6,422.3 L2541.2,424.3 L2553.8,428.6 L2568.9,431.6 L2579.0,428.6 L2594.2,432.9 L2609.3,435.4 L2624.4,437.4 L2642.1,439.2 L2650.9,429.8 L2667.4,433.6 L2674.9,434.9 L2680.0,433.6 L2692.6,434.9 L2705.2,436.9 L2715.3,438.7 L2727.9,439.9 L2735.5,432.4 L2741.8,432.4 L2748.1,423.5 L2754.4,422.3 L2762.0,408.4 L2773.3,408.4 L2778.4,410.2 L2782.2,399.1" fill="none" stroke="#eab839" stroke-width="4" stroke-linejoin="round"/>
<path d="M1532.6,289.8 L1545.2,292.8 L1557.9,294.8 L1567.9,296.6 L1578.0,295.6 L1588.1,296.8 L1595.7,294.8 L1608.3,296.1 L1626.0,297.9 L1641.1,299.6 L1651.2,297.4 L1671.4,298.6 L1686.6,297.9 L1701.7,300.4 L1716.8,299.9 L1729.5,302.4 L1742.1,304.9 L1757.2,307.4 L1769.8,310.0 L1787.5,310.0 L1805.2,312.5 L1822.8,314.3 L1843.0,317.5 L1860.7,318.8 L1878.4,321.3 L1898.5,323.8 L1913.7,325.1 L1926.3,327.6 L1944.0,330.2 L1961.6,332.7 L1981.8,334.4 L1999.5,335.7 L2012.1,338.5 L2034.8,341.5 L2044.9,340.8 L2062.6,342.0 L2075.2,342.8 L2090.3,345.3 L2099.2,345.3 L2105.5,342.8 L2125.7,343.5 L2140.8,345.3 L2150.0,346.1 L2162.6,347.3 L2180.3,348.6 L2190.4,350.9 L2210.6,353.6 L2233.3,356.7 L2256.0,358.7 L2273.7,361.2 L2286.3,361.7 L2301.4,359.9 L2311.5,359.9 L2331.7,362.2 L2354.4,366.8 L2377.1,368.0 L2392.3,368.0 L2422.6,372.3 L2440.2,373.1 L2462.9,373.6 L2483.1,376.1 L2495.7,376.8 L2515.9,375.6 L2523.5,373.1 L2536.1,374.3 L2548.7,376.1 L2563.9,377.4 L2568.9,379.4 L2584.1,379.4 L2604.3,381.1 L2624.4,382.6 L2642.1,384.4 L2652.2,381.9 L2674.9,383.9 L2700.2,385.7 L2715.3,387.4 L2727.9,388.2 L2740.5,385.7 L2750.6,383.2 L2760.7,379.9 L2775.9,380.6 L2782.2,376.8" fill="none" stroke="#6ed0e0" stroke-width="4" stroke-linejoin="round"/>
<text x="1521.0" y="203.8" font-size="23" text-anchor="end" font-weight="400" fill="#d8d9da" stroke="#d8d9da" stroke-width="0.55" >500%</text>
<text x="1521.0" y="268.3" font-size="23" text-anchor="end" font-weight="400" fill="#d8d9da" stroke="#d8d9da" stroke-width="0.55" >400%</text>
<text x="1521.0" y="332.8" font-size="23" text-anchor="end" font-weight="400" fill="#d8d9da" stroke="#d8d9da" stroke-width="0.55" >300%</text>
<text x="1521.0" y="397.3" font-size="23" text-anchor="end" font-weight="400" fill="#d8d9da" stroke="#d8d9da" stroke-width="0.55" >200%</text>
<text x="1521.0" y="461.7" font-size="23" text-anchor="end" font-weight="400" fill="#d8d9da" stroke="#d8d9da" stroke-width="0.55" >100%</text>
<text x="1521.0" y="526.2" font-size="23" text-anchor="end" font-weight="400" fill="#d8d9da" stroke="#d8d9da" stroke-width="0.55" >0%</text>
<text x="1543.2" y="552.0" font-size="23" text-anchor="middle" font-weight="400" fill="#d8d9da" stroke="#d8d9da" stroke-width="0.55" >10:32</text>
<text x="1709.8" y="552.0" font-size="23" text-anchor="middle" font-weight="400" fill="#d8d9da" stroke="#d8d9da" stroke-width="0.55" >10:34</text>
<text x="1876.4" y="552.0" font-size="23" text-anchor="middle" font-weight="400" fill="#d8d9da" stroke="#d8d9da" stroke-width="0.55" >10:36</text>
<text x="2043.0" y="552.0" font-size="23" text-anchor="middle" font-weight="400" fill="#d8d9da" stroke="#d8d9da" stroke-width="0.55" >10:38</text>
<text x="2209.6" y="552.0" font-size="23" text-anchor="middle" font-weight="400" fill="#d8d9da" stroke="#d8d9da" stroke-width="0.55" >10:40</text>
<text x="2376.2" y="552.0" font-size="23" text-anchor="middle" font-weight="400" fill="#d8d9da" stroke="#d8d9da" stroke-width="0.55" >10:42</text>
<text x="2542.8" y="552.0" font-size="23" text-anchor="middle" font-weight="400" fill="#d8d9da" stroke="#d8d9da" stroke-width="0.55" >10:44</text>
<text x="2709.4" y="552.0" font-size="23" text-anchor="middle" font-weight="400" fill="#d8d9da" stroke="#d8d9da" stroke-width="0.55" >10:46</text>
<rect x="1507.3" y="587.0" width="25" height="7" rx="2" fill="#7eb26d"/>
<text x="1541.0" y="599.0" font-size="25" text-anchor="start" font-weight="400" fill="#d8d9da" stroke="#d8d9da" stroke-width="0.55" textLength="88" lengthAdjust="spacingAndGlyphs">load 1m</text>
<rect x="1650.2" y="587.0" width="25" height="7" rx="2" fill="#eab839"/>
<text x="1684.3" y="599.0" font-size="25" text-anchor="start" font-weight="400" fill="#d8d9da" stroke="#d8d9da" stroke-width="0.55" textLength="88.5" lengthAdjust="spacingAndGlyphs">load 5m</text>
<rect x="1794.1" y="587.0" width="25" height="7" rx="2" fill="#6ed0e0"/>
<text x="1828.3" y="599.0" font-size="25" text-anchor="start" font-weight="400" fill="#d8d9da" stroke="#d8d9da" stroke-width="0.55" textLength="101.2" lengthAdjust="spacingAndGlyphs">load 15m</text>
<line x1="108.3" y1="716.8" x2="2070.5" y2="716.8" stroke="#4b4b4b" stroke-width="2"/>
<line x1="108.3" y1="781.2" x2="2070.5" y2="781.2" stroke="#4b4b4b" stroke-width="2"/>
<line x1="108.3" y1="845.6" x2="2070.5" y2="845.6" stroke="#4b4b4b" stroke-width="2"/>
<line x1="108.3" y1="910.0" x2="2070.5" y2="910.0" stroke="#4b4b4b" stroke-width="2"/>
<line x1="108.3" y1="974.4" x2="2070.5" y2="974.4" stroke="#4b4b4b" stroke-width="2"/>
<line x1="108.3" y1="1038.8" x2="2070.5" y2="1038.8" stroke="#4b4b4b" stroke-width="2"/>
<line x1="125.1" y1="716.8" x2="125.1" y2="1038.8" stroke="#4b4b4b" stroke-width="2"/>
<line x1="255.9" y1="716.8" x2="255.9" y2="1038.8" stroke="#4b4b4b" stroke-width="2"/>
<line x1="386.7" y1="716.8" x2="386.7" y2="1038.8" stroke="#4b4b4b" stroke-width="2"/>
<line x1="517.6" y1="716.8" x2="517.6" y2="1038.8" stroke="#4b4b4b" stroke-width="2"/>
<line x1="648.4" y1="716.8" x2="648.4" y2="1038.8" stroke="#4b4b4b" stroke-width="2"/>
<line x1="779.2" y1="716.8" x2="779.2" y2="1038.8" stroke="#4b4b4b" stroke-width="2"/>
<line x1="910.0" y1="716.8" x2="910.0" y2="1038.8" stroke="#4b4b4b" stroke-width="2"/>
<line x1="1040.8" y1="716.8" x2="1040.8" y2="1038.8" stroke="#4b4b4b" stroke-width="2"/>
<line x1="1171.7" y1="716.8" x2="1171.7" y2="1038.8" stroke="#4b4b4b" stroke-width="2"/>
<line x1="1302.5" y1="716.8" x2="1302.5" y2="1038.8" stroke="#4b4b4b" stroke-width="2"/>
<line x1="1433.3" y1="716.8" x2="1433.3" y2="1038.8" stroke="#4b4b4b" stroke-width="2"/>
<line x1="1564.1" y1="716.8" x2="1564.1" y2="1038.8" stroke="#4b4b4b" stroke-width="2"/>
<line x1="1694.9" y1="716.8" x2="1694.9" y2="1038.8" stroke="#4b4b4b" stroke-width="2"/>
<line x1="1825.8" y1="716.8" x2="1825.8" y2="1038.8" stroke="#4b4b4b" stroke-width="2"/>
<line x1="1956.6" y1="716.8" x2="1956.6" y2="1038.8" stroke="#4b4b4b" stroke-width="2"/>
<path d="M108.3,945.8 L2070.5,945.8 L2070.5,1038.8 L108.3,1038.8 Z" fill="#7eb26d" fill-opacity="0.1"/>
<path d="M108.3,931.8 L2070.5,931.8 L2070.5,945.8 L108.3,945.8 Z" fill="#eab839" fill-opacity="0.1"/>
<path d="M108.3,818.0 L2070.5,818.0 L2070.5,931.8 L108.3,931.8 Z" fill="#6ed0e0" fill-opacity="0.1"/>
<path d="M108.3,767.3 L2070.5,767.3 L2070.5,818.0 L108.3,818.0 Z" fill="#ef843c" fill-opacity="0.1"/>
<path d="M108.3,945.8 L2070.5,945.8" fill="none" stroke="#7eb26d" stroke-width="4" stroke-linejoin="round"/>
<path d="M108.3,931.8 L2070.5,931.8" fill="none" stroke="#eab839" stroke-width="4" stroke-linejoin="round"/>
<path d="M108.3,818.0 L2070.5,818.0" fill="none" stroke="#6ed0e0" stroke-width="4" stroke-linejoin="round"/>
<path d="M108.3,767.3 L2070.5,767.3" fill="none" stroke="#ef843c" stroke-width="4" stroke-linejoin="round"/>
<text x="97.0" y="726.0" font-size="23" text-anchor="end" font-weight="400" fill="#d8d9da" stroke="#d8d9da" stroke-width="0.55" >9 GiB</text>
<text x="97.0" y="790.4" font-size="23" text-anchor="end" font-weight="400" fill="#d8d9da" stroke="#d8d9da" stroke-width="0.55" >7 GiB</text>
<text x="97.0" y="854.8" font-size="23" text-anchor="end" font-weight="400" fill="#d8d9da" stroke="#d8d9da" stroke-width="0.55" >6 GiB</text>
<text x="97.0" y="919.2" font-size="23" text-anchor="end" font-weight="400" fill="#d8d9da" stroke="#d8d9da" stroke-width="0.55" >4 GiB</text>
<text x="97.0" y="983.6" font-size="23" text-anchor="end" font-weight="400" fill="#d8d9da" stroke="#d8d9da" stroke-width="0.55" >2 GiB</text>
<text x="97.0" y="1048.0" font-size="23" text-anchor="end" font-weight="400" fill="#d8d9da" stroke="#d8d9da" stroke-width="0.55" >0 B</text>
<text x="125.1" y="1074.0" font-size="23" text-anchor="middle" font-weight="400" fill="#d8d9da" stroke="#d8d9da" stroke-width="0.55" >10:32</text>
<text x="255.9" y="1074.0" font-size="23" text-anchor="middle" font-weight="400" fill="#d8d9da" stroke="#d8d9da" stroke-width="0.55" >10:33</text>
<text x="386.7" y="1074.0" font-size="23" text-anchor="middle" font-weight="400" fill="#d8d9da" stroke="#d8d9da" stroke-width="0.55" >10:34</text>
<text x="517.6" y="1074.0" font-size="23" text-anchor="middle" font-weight="400" fill="#d8d9da" stroke="#d8d9da" stroke-width="0.55" >10:35</text>
<text x="648.4" y="1074.0" font-size="23" text-anchor="middle" font-weight="400" fill="#d8d9da" stroke="#d8d9da" stroke-width="0.55" >10:36</text>
<text x="779.2" y="1074.0" font-size="23" text-anchor="middle" font-weight="400" fill="#d8d9da" stroke="#d8d9da" stroke-width="0.55" >10:37</text>
<text x="910.0" y="1074.0" font-size="23" text-anchor="middle" font-weight="400" fill="#d8d9da" stroke="#d8d9da" stroke-width="0.55" >10:38</text>
<text x="1040.8" y="1074.0" font-size="23" text-anchor="middle" font-weight="400" fill="#d8d9da" stroke="#d8d9da" stroke-width="0.55" >10:39</text>
<text x="1171.7" y="1074.0" font-size="23" text-anchor="middle" font-weight="400" fill="#d8d9da" stroke="#d8d9da" stroke-width="0.55" >10:40</text>
<text x="1302.5" y="1074.0" font-size="23" text-anchor="middle" font-weight="400" fill="#d8d9da" stroke="#d8d9da" stroke-width="0.55" >10:41</text>
<text x="1433.3" y="1074.0" font-size="23" text-anchor="middle" font-weight="400" fill="#d8d9da" stroke="#d8d9da" stroke-width="0.55" >10:42</text>
<text x="1564.1" y="1074.0" font-size="23" text-anchor="middle" font-weight="400" fill="#d8d9da" stroke="#d8d9da" stroke-width="0.55" >10:43</text>
<text x="1694.9" y="1074.0" font-size="23" text-anchor="middle" font-weight="400" fill="#d8d9da" stroke="#d8d9da" stroke-width="0.55" >10:44</text>
<text x="1825.8" y="1074.0" font-size="23" text-anchor="middle" font-weight="400" fill="#d8d9da" stroke="#d8d9da" stroke-width="0.55" >10:45</text>
<text x="1956.6" y="1074.0" font-size="23" text-anchor="middle" font-weight="400" fill="#d8d9da" stroke="#d8d9da" stroke-width="0.55" >10:46</text>
<rect x="86.5" y="1108.2" width="25" height="7" rx="2" fill="#7eb26d"/>
<text x="120.0" y="1120.2" font-size="25" text-anchor="start" font-weight="400" fill="#d8d9da" stroke="#d8d9da" stroke-width="0.55" textLength="164.5" lengthAdjust="spacingAndGlyphs">memory usage</text>
<rect x="305.5" y="1108.2" width="25" height="7" rx="2" fill="#eab839"/>
<text x="339.0" y="1120.2" font-size="25" text-anchor="start" font-weight="400" fill="#d8d9da" stroke="#d8d9da" stroke-width="0.55" textLength="178" lengthAdjust="spacingAndGlyphs">memory buffers</text>
<rect x="538.0" y="1108.2" width="25" height="7" rx="2" fill="#6ed0e0"/>
<text x="572.0" y="1120.2" font-size="25" text-anchor="start" font-weight="400" fill="#d8d9da" stroke="#d8d9da" stroke-width="0.55" textLength="176" lengthAdjust="spacingAndGlyphs">memory cached</text>
<rect x="769.0" y="1108.2" width="25" height="7" rx="2" fill="#ef843c"/>
<text x="804.0" y="1120.2" font-size="25" text-anchor="start" font-weight="400" fill="#d8d9da" stroke="#d8d9da" stroke-width="0.55" textLength="142.6" lengthAdjust="spacingAndGlyphs">memory free</text>
<line x1="132.6" y1="1241.0" x2="2014.4" y2="1241.0" stroke="#4b4b4b" stroke-width="2"/>
<line x1="132.6" y1="1303.6" x2="2014.4" y2="1303.6" stroke="#4b4b4b" stroke-width="2"/>
<line x1="132.6" y1="1366.2" x2="2014.4" y2="1366.2" stroke="#4b4b4b" stroke-width="2"/>
<line x1="132.6" y1="1428.7" x2="2014.4" y2="1428.7" stroke="#4b4b4b" stroke-width="2"/>
<line x1="132.6" y1="1491.3" x2="2014.4" y2="1491.3" stroke="#4b4b4b" stroke-width="2"/>
<line x1="132.6" y1="1553.9" x2="2014.4" y2="1553.9" stroke="#4b4b4b" stroke-width="2"/>
<line x1="147.3" y1="1241.0" x2="147.3" y2="1553.9" stroke="#4b4b4b" stroke-width="2"/>
<line x1="272.8" y1="1241.0" x2="272.8" y2="1553.9" stroke="#4b4b4b" stroke-width="2"/>
<line x1="398.4" y1="1241.0" x2="398.4" y2="1553.9" stroke="#4b4b4b" stroke-width="2"/>
<line x1="523.9" y1="1241.0" x2="523.9" y2="1553.9" stroke="#4b4b4b" stroke-width="2"/>
<line x1="649.4" y1="1241.0" x2="649.4" y2="1553.9" stroke="#4b4b4b" stroke-width="2"/>
<line x1="775.0" y1="1241.0" x2="775.0" y2="1553.9" stroke="#4b4b4b" stroke-width="2"/>
<line x1="900.5" y1="1241.0" x2="900.5" y2="1553.9" stroke="#4b4b4b" stroke-width="2"/>
<line x1="1026.0" y1="1241.0" x2="1026.0" y2="1553.9" stroke="#4b4b4b" stroke-width="2"/>
<line x1="1151.5" y1="1241.0" x2="1151.5" y2="1553.9" stroke="#4b4b4b" stroke-width="2"/>
<line x1="1277.1" y1="1241.0" x2="1277.1" y2="1553.9" stroke="#4b4b4b" stroke-width="2"/>
<line x1="1402.6" y1="1241.0" x2="1402.6" y2="1553.9" stroke="#4b4b4b" stroke-width="2"/>
<line x1="1528.1" y1="1241.0" x2="1528.1" y2="1553.9" stroke="#4b4b4b" stroke-width="2"/>
<line x1="1653.7" y1="1241.0" x2="1653.7" y2="1553.9" stroke="#4b4b4b" stroke-width="2"/>
<line x1="1779.2" y1="1241.0" x2="1779.2" y2="1553.9" stroke="#4b4b4b" stroke-width="2"/>
<line x1="1904.7" y1="1241.0" x2="1904.7" y2="1553.9" stroke="#4b4b4b" stroke-width="2"/>
<path d="M132.8,1553.9 L2014.4,1553.9 L2014.4,1553.9 L132.8,1553.9 Z" fill="#7eb26d" fill-opacity="0.1"/>
<path d="M132.6,1277.5 L156.5,1278.7 L167.0,1273.3 L183.8,1272.4 L204.8,1274.1 L246.8,1273.3 L263.5,1275.4 L301.3,1274.5 L334.9,1274.1 L360.0,1275.4 L393.6,1275.4 L414.6,1274.1 L435.6,1277.5 L477.5,1278.3 L519.5,1277.5 L561.4,1277.5 L603.4,1278.3 L645.3,1278.7 L660.0,1279.6 L668.4,1410.5 L693.6,1410.5 L702.0,1281.7 L750.2,1281.7 L760.7,1286.7 L779.6,1288.0 L813.1,1287.1 L855.1,1288.0 L897.1,1287.1 L939.0,1287.1 L981.0,1288.0 L1022.9,1288.0 L1060.0,1287.4 L1102.2,1287.8 L1157.0,1288.7 L1186.6,1287.8 L1228.8,1288.7 L1287.8,1289.5 L1296.3,1417.4 L1321.6,1417.4 L1330.0,1292.1 L1397.6,1292.9 L1439.7,1292.1 L1481.9,1292.9 L1524.1,1292.9 L1608.5,1292.9 L1650.7,1292.9 L1735.1,1292.9 L1819.5,1292.1 L1914.4,1292.9 L1922.9,1417.4 L1950.3,1417.4 L1956.6,1294.2 L1988.3,1295.0 L2014.4,1294.2 L2014.4,1553.9 L132.6,1553.9 Z" fill="#eab839" fill-opacity="0.1"/>
<path d="M132.6,1306.0 L141.9,1306.0 L150.3,1297.6 L156.5,1297.6 L167.0,1294.3 L192.2,1294.3 L200.6,1304.7 L215.3,1303.9 L225.8,1313.1 L234.2,1313.1 L242.6,1309.8 L250.9,1309.8 L259.3,1300.5 L267.7,1300.5 L274.0,1304.7 L282.4,1303.9 L292.9,1296.4 L301.3,1296.4 L309.7,1284.6 L318.1,1283.8 L326.5,1279.6 L334.9,1279.6 L347.4,1288.0 L351.6,1290.9 L360.0,1290.9 L368.4,1278.7 L376.8,1278.7 L385.2,1272.4 L393.6,1272.4 L402.0,1268.2 L410.4,1268.2 L418.8,1249.4 L427.2,1249.4 L435.6,1255.2 L456.5,1255.2 L477.5,1261.5 L519.5,1262.0 L527.9,1276.6 L536.2,1276.6 L544.6,1281.7 L553.0,1281.7 L561.4,1278.3 L569.8,1278.3 L578.2,1284.6 L586.6,1285.9 L595.0,1296.4 L603.4,1298.5 L609.7,1298.5 L620.2,1293.4 L628.5,1293.4 L636.9,1290.1 L645.3,1290.1 L651.6,1301.8 L660.0,1301.8 L668.4,1347.5 L676.8,1347.5 L685.2,1341.2 L693.6,1341.2 L704.1,1306.0 L716.7,1304.7 L727.1,1311.9 L737.6,1313.1 L746.0,1317.3 L754.4,1317.3 L762.8,1321.5 L771.2,1322.4 L777.5,1330.8 L785.9,1330.8 L794.3,1320.3 L804.8,1320.7 L817.3,1322.8 L827.8,1329.9 L838.3,1329.9 L844.6,1325.7 L853.0,1348.0 L876.1,1347.1 L886.6,1355.1 L895.0,1355.1 L903.4,1360.5 L926.4,1361.4 L939.0,1364.7 L960.0,1365.6 L970.5,1382.4 L978.9,1364.3 L987.3,1364.3 L995.7,1382.4 L1001.9,1382.4 L1010.3,1418.9 L1018.7,1419.3 L1027.1,1416.8 L1035.5,1416.8 L1043.9,1408.4 L1052.3,1408.4 L1060.0,1413.2 L1068.4,1414.0 L1076.9,1412.3 L1087.4,1412.3 L1095.9,1425.0 L1112.7,1424.6 L1119.1,1411.9 L1127.5,1411.9 L1135.9,1406.8 L1146.5,1406.8 L1154.9,1415.3 L1163.4,1415.3 L1171.8,1409.8 L1180.3,1409.8 L1186.6,1415.3 L1203.5,1416.1 L1211.9,1417.4 L1222.4,1435.1 L1233.0,1436.4 L1245.7,1439.3 L1254.1,1439.3 L1262.5,1452.0 L1271.0,1452.4 L1279.4,1468.0 L1287.8,1468.0 L1296.3,1502.6 L1304.7,1503.0 L1313.2,1505.1 L1321.6,1505.1 L1330.0,1440.6 L1346.9,1441.9 L1363.8,1442.7 L1380.7,1442.7 L1389.1,1439.3 L1397.6,1439.7 L1406.0,1442.7 L1414.4,1443.5 L1422.9,1452.4 L1431.3,1452.4 L1439.7,1450.3 L1448.2,1450.3 L1456.6,1446.1 L1473.5,1446.1 L1481.9,1442.7 L1503.0,1441.9 L1515.7,1433.0 L1524.1,1433.4 L1532.6,1437.2 L1553.7,1438.5 L1562.1,1430.9 L1572.7,1430.9 L1581.1,1440.6 L1589.5,1441.4 L1598.0,1446.9 L1606.4,1416.5 L1614.9,1416.5 L1623.3,1409.8 L1631.7,1409.8 L1640.2,1418.2 L1648.6,1418.2 L1657.0,1415.3 L1680.3,1415.3 L1690.8,1404.7 L1714.0,1404.7 L1730.9,1434.3 L1739.3,1434.3 L1747.8,1436.4 L1760.4,1437.2 L1768.9,1438.5 L1777.3,1438.5 L1783.6,1428.8 L1792.1,1428.8 L1800.5,1437.2 L1808.9,1437.2 L1817.4,1428.8 L1827.9,1428.8 L1836.4,1431.3 L1844.8,1431.3 L1849.0,1422.4 L1857.5,1433.4 L1865.9,1433.4 L1874.3,1423.7 L1882.8,1423.7 L1891.2,1418.6 L1899.7,1418.6 L1906.0,1422.4 L1914.4,1422.4 L1922.9,1481.5 L1931.3,1481.5 L1939.7,1486.2 L1948.2,1486.2 L1956.6,1437.2 L1971.4,1438.5 L1981.9,1453.2 L1990.4,1453.2 L2000.9,1449.0 L2014.4,1434.3 L2014.4,1553.9 L132.6,1553.9 Z" fill="#6ed0e0" fill-opacity="0.1"/>
<path d="M132.8,1553.9 L2014.4,1553.9" fill="none" stroke="#7eb26d" stroke-width="4" stroke-linejoin="round"/>
<path d="M132.6,1277.5 L156.5,1278.7 L167.0,1273.3 L183.8,1272.4 L204.8,1274.1 L246.8,1273.3 L263.5,1275.4 L301.3,1274.5 L334.9,1274.1 L360.0,1275.4 L393.6,1275.4 L414.6,1274.1 L435.6,1277.5 L477.5,1278.3 L519.5,1277.5 L561.4,1277.5 L603.4,1278.3 L645.3,1278.7 L660.0,1279.6 L668.4,1410.5 L693.6,1410.5 L702.0,1281.7 L750.2,1281.7 L760.7,1286.7 L779.6,1288.0 L813.1,1287.1 L855.1,1288.0 L897.1,1287.1 L939.0,1287.1 L981.0,1288.0 L1022.9,1288.0 L1060.0,1287.4 L1102.2,1287.8 L1157.0,1288.7 L1186.6,1287.8 L1228.8,1288.7 L1287.8,1289.5 L1296.3,1417.4 L1321.6,1417.4 L1330.0,1292.1 L1397.6,1292.9 L1439.7,1292.1 L1481.9,1292.9 L1524.1,1292.9 L1608.5,1292.9 L1650.7,1292.9 L1735.1,1292.9 L1819.5,1292.1 L1914.4,1292.9 L1922.9,1417.4 L1950.3,1417.4 L1956.6,1294.2 L1988.3,1295.0 L2014.4,1294.2" fill="none" stroke="#eab839" stroke-width="4" stroke-linejoin="round"/>
<path d="M132.6,1306.0 L141.9,1306.0 L150.3,1297.6 L156.5,1297.6 L167.0,1294.3 L192.2,1294.3 L200.6,1304.7 L215.3,1303.9 L225.8,1313.1 L234.2,1313.1 L242.6,1309.8 L250.9,1309.8 L259.3,1300.5 L267.7,1300.5 L274.0,1304.7 L282.4,1303.9 L292.9,1296.4 L301.3,1296.4 L309.7,1284.6 L318.1,1283.8 L326.5,1279.6 L334.9,1279.6 L347.4,1288.0 L351.6,1290.9 L360.0,1290.9 L368.4,1278.7 L376.8,1278.7 L385.2,1272.4 L393.6,1272.4 L402.0,1268.2 L410.4,1268.2 L418.8,1249.4 L427.2,1249.4 L435.6,1255.2 L456.5,1255.2 L477.5,1261.5 L519.5,1262.0 L527.9,1276.6 L536.2,1276.6 L544.6,1281.7 L553.0,1281.7 L561.4,1278.3 L569.8,1278.3 L578.2,1284.6 L586.6,1285.9 L595.0,1296.4 L603.4,1298.5 L609.7,1298.5 L620.2,1293.4 L628.5,1293.4 L636.9,1290.1 L645.3,1290.1 L651.6,1301.8 L660.0,1301.8 L668.4,1347.5 L676.8,1347.5 L685.2,1341.2 L693.6,1341.2 L704.1,1306.0 L716.7,1304.7 L727.1,1311.9 L737.6,1313.1 L746.0,1317.3 L754.4,1317.3 L762.8,1321.5 L771.2,1322.4 L777.5,1330.8 L785.9,1330.8 L794.3,1320.3 L804.8,1320.7 L817.3,1322.8 L827.8,1329.9 L838.3,1329.9 L844.6,1325.7 L853.0,1348.0 L876.1,1347.1 L886.6,1355.1 L895.0,1355.1 L903.4,1360.5 L926.4,1361.4 L939.0,1364.7 L960.0,1365.6 L970.5,1382.4 L978.9,1364.3 L987.3,1364.3 L995.7,1382.4 L1001.9,1382.4 L1010.3,1418.9 L1018.7,1419.3 L1027.1,1416.8 L1035.5,1416.8 L1043.9,1408.4 L1052.3,1408.4 L1060.0,1413.2 L1068.4,1414.0 L1076.9,1412.3 L1087.4,1412.3 L1095.9,1425.0 L1112.7,1424.6 L1119.1,1411.9 L1127.5,1411.9 L1135.9,1406.8 L1146.5,1406.8 L1154.9,1415.3 L1163.4,1415.3 L1171.8,1409.8 L1180.3,1409.8 L1186.6,1415.3 L1203.5,1416.1 L1211.9,1417.4 L1222.4,1435.1 L1233.0,1436.4 L1245.7,1439.3 L1254.1,1439.3 L1262.5,1452.0 L1271.0,1452.4 L1279.4,1468.0 L1287.8,1468.0 L1296.3,1502.6 L1304.7,1503.0 L1313.2,1505.1 L1321.6,1505.1 L1330.0,1440.6 L1346.9,1441.9 L1363.8,1442.7 L1380.7,1442.7 L1389.1,1439.3 L1397.6,1439.7 L1406.0,1442.7 L1414.4,1443.5 L1422.9,1452.4 L1431.3,1452.4 L1439.7,1450.3 L1448.2,1450.3 L1456.6,1446.1 L1473.5,1446.1 L1481.9,1442.7 L1503.0,1441.9 L1515.7,1433.0 L1524.1,1433.4 L1532.6,1437.2 L1553.7,1438.5 L1562.1,1430.9 L1572.7,1430.9 L1581.1,1440.6 L1589.5,1441.4 L1598.0,1446.9 L1606.4,1416.5 L1614.9,1416.5 L1623.3,1409.8 L1631.7,1409.8 L1640.2,1418.2 L1648.6,1418.2 L1657.0,1415.3 L1680.3,1415.3 L1690.8,1404.7 L1714.0,1404.7 L1730.9,1434.3 L1739.3,1434.3 L1747.8,1436.4 L1760.4,1437.2 L1768.9,1438.5 L1777.3,1438.5 L1783.6,1428.8 L1792.1,1428.8 L1800.5,1437.2 L1808.9,1437.2 L1817.4,1428.8 L1827.9,1428.8 L1836.4,1431.3 L1844.8,1431.3 L1849.0,1422.4 L1857.5,1433.4 L1865.9,1433.4 L1874.3,1423.7 L1882.8,1423.7 L1891.2,1418.6 L1899.7,1418.6 L1906.0,1422.4 L1914.4,1422.4 L1922.9,1481.5 L1931.3,1481.5 L1939.7,1486.2 L1948.2,1486.2 L1956.6,1437.2 L1971.4,1438.5 L1981.9,1453.2 L1990.4,1453.2 L2000.9,1449.0 L2014.4,1434.3" fill="none" stroke="#6ed0e0" stroke-width="4" stroke-linejoin="round"/>
<text x="121.0" y="1250.2" font-size="23" text-anchor="end" font-weight="400" fill="#d8d9da" stroke="#d8d9da" stroke-width="0.55" >1.2 MiB</text>
<text x="121.0" y="1312.8" font-size="23" text-anchor="end" font-weight="400" fill="#d8d9da" stroke="#d8d9da" stroke-width="0.55" >977 KiB</text>
<text x="121.0" y="1375.4" font-size="23" text-anchor="end" font-weight="400" fill="#d8d9da" stroke="#d8d9da" stroke-width="0.55" >732 KiB</text>
<text x="121.0" y="1437.9" font-size="23" text-anchor="end" font-weight="400" fill="#d8d9da" stroke="#d8d9da" stroke-width="0.55" >488 KiB</text>
<text x="121.0" y="1500.5" font-size="23" text-anchor="end" font-weight="400" fill="#d8d9da" stroke="#d8d9da" stroke-width="0.55" >244 KiB</text>
<text x="121.0" y="1563.1" font-size="23" text-anchor="end" font-weight="400" fill="#d8d9da" stroke="#d8d9da" stroke-width="0.55" >0 B</text>
<text x="147.3" y="1590.0" font-size="23" text-anchor="middle" font-weight="400" fill="#d8d9da" stroke="#d8d9da" stroke-width="0.55" >10:32</text>
<text x="272.8" y="1590.0" font-size="23" text-anchor="middle" font-weight="400" fill="#d8d9da" stroke="#d8d9da" stroke-width="0.55" >10:33</text>
<text x="398.4" y="1590.0" font-size="23" text-anchor="middle" font-weight="400" fill="#d8d9da" stroke="#d8d9da" stroke-width="0.55" >10:34</text>
<text x="523.9" y="1590.0" font-size="23" text-anchor="middle" font-weight="400" fill="#d8d9da" stroke="#d8d9da" stroke-width="0.55" >10:35</text>
<text x="649.4" y="1590.0" font-size="23" text-anchor="middle" font-weight="400" fill="#d8d9da" stroke="#d8d9da" stroke-width="0.55" >10:36</text>
<text x="775.0" y="1590.0" font-size="23" text-anchor="middle" font-weight="400" fill="#d8d9da" stroke="#d8d9da" stroke-width="0.55" >10:37</text>
<text x="900.5" y="1590.0" font-size="23" text-anchor="middle" font-weight="400" fill="#d8d9da" stroke="#d8d9da" stroke-width="0.55" >10:38</text>
<text x="1026.0" y="1590.0" font-size="23" text-anchor="middle" font-weight="400" fill="#d8d9da" stroke="#d8d9da" stroke-width="0.55" >10:39</text>
<text x="1151.5" y="1590.0" font-size="23" text-anchor="middle" font-weight="400" fill="#d8d9da" stroke="#d8d9da" stroke-width="0.55" >10:40</text>
<text x="1277.1" y="1590.0" font-size="23" text-anchor="middle" font-weight="400" fill="#d8d9da" stroke="#d8d9da" stroke-width="0.55" >10:41</text>
<text x="1402.6" y="1590.0" font-size="23" text-anchor="middle" font-weight="400" fill="#d8d9da" stroke="#d8d9da" stroke-width="0.55" >10:42</text>
<text x="1528.1" y="1590.0" font-size="23" text-anchor="middle" font-weight="400" fill="#d8d9da" stroke="#d8d9da" stroke-width="0.55" >10:43</text>
<text x="1653.7" y="1590.0" font-size="23" text-anchor="middle" font-weight="400" fill="#d8d9da" stroke="#d8d9da" stroke-width="0.55" >10:44</text>
<text x="1779.2" y="1590.0" font-size="23" text-anchor="middle" font-weight="400" fill="#d8d9da" stroke="#d8d9da" stroke-width="0.55" >10:45</text>
<text x="1904.7" y="1590.0" font-size="23" text-anchor="middle" font-weight="400" fill="#d8d9da" stroke="#d8d9da" stroke-width="0.55" >10:46</text>
<line x1="2014.4" y1="1241.0" x2="2024.4" y2="1241.0" stroke="#4b4b4b" stroke-width="2"/>
<text x="2036.4" y="1249.5" font-size="23.5" text-anchor="start" font-weight="400" fill="#d8d9da" stroke="#d8d9da" stroke-width="0.55" >37 ms</text>
<line x1="2014.4" y1="1293.0" x2="2024.4" y2="1293.0" stroke="#4b4b4b" stroke-width="2"/>
<text x="2036.4" y="1301.5" font-size="23.5" text-anchor="start" font-weight="400" fill="#d8d9da" stroke="#d8d9da" stroke-width="0.55" >36 ms</text>
<line x1="2014.4" y1="1345.0" x2="2024.4" y2="1345.0" stroke="#4b4b4b" stroke-width="2"/>
<text x="2036.4" y="1353.5" font-size="23.5" text-anchor="start" font-weight="400" fill="#d8d9da" stroke="#d8d9da" stroke-width="0.55" >35 ms</text>
<line x1="2014.4" y1="1397.0" x2="2024.4" y2="1397.0" stroke="#4b4b4b" stroke-width="2"/>
<text x="2036.4" y="1405.5" font-size="23.5" text-anchor="start" font-weight="400" fill="#d8d9da" stroke="#d8d9da" stroke-width="0.55" >34 ms</text>
<line x1="2014.4" y1="1449.0" x2="2024.4" y2="1449.0" stroke="#4b4b4b" stroke-width="2"/>
<text x="2036.4" y="1457.5" font-size="23.5" text-anchor="start" font-weight="400" fill="#d8d9da" stroke="#d8d9da" stroke-width="0.55" >33 ms</text>
<line x1="2014.4" y1="1501.0" x2="2024.4" y2="1501.0" stroke="#4b4b4b" stroke-width="2"/>
<text x="2036.4" y="1509.5" font-size="23.5" text-anchor="start" font-weight="400" fill="#d8d9da" stroke="#d8d9da" stroke-width="0.55" >32 ms</text>
<line x1="2014.4" y1="1554.5" x2="2024.4" y2="1554.5" stroke="#4b4b4b" stroke-width="2"/>
<text x="2036.4" y="1563.0" font-size="23.5" text-anchor="start" font-weight="400" fill="#d8d9da" stroke="#d8d9da" stroke-width="0.55" >31 ms</text>
<path d="M2305.79,1045.87 A196.0,196.0 0 1 1 2678.61,1045.87 L2608.23,1023.00 A122.00000000000001,122.00000000000001 0 1 0 2376.17,1023.00 Z" fill="#262626"/>
<path d="M2293.62,1049.82 A208.8,208.8 0 0 1 2679.87,893.77 L2668.36,899.38 A196.0,196.0 0 0 0 2305.79,1045.87 Z" fill="#31a82c"/>
<path d="M2679.87,893.77 A208.8,208.8 0 0 1 2700.59,972.19 L2687.81,972.99 A196.0,196.0 0 0 0 2668.36,899.38 Z" fill="#d77527"/>
<path d="M2700.59,972.19 A208.8,208.8 0 0 1 2690.78,1049.82 L2678.61,1045.87 A196.0,196.0 0 0 0 2687.81,972.99 Z" fill="#df3434"/>
<path d="M2305.79,1045.87 A196.0,196.0 0 0 1 2381.18,823.77 L2383.34,826.90 A192.2,192.2 0 0 0 2309.41,1044.69 Z" fill="#1c1a1b"/>
<path d="M2309.41,1044.69 A192.20000000000002,192.20000000000002 0 0 1 2383.34,826.90 L2423.10,884.76 A122.00000000000001,122.00000000000001 0 0 0 2376.17,1023.00 Z" fill="#31a82c"/>
<text x="2419.8" y="1030.8" font-size="71.5" font-weight="700" fill="#d8d9da" stroke="#d8d9da" stroke-width="0.8" textLength="141.5" lengthAdjust="spacingAndGlyphs">34%</text>
<path d="M2309.59,1564.00 A191.89999999999998,191.89999999999998 0 1 1 2674.61,1564.00 L2604.23,1541.13 A117.89999999999999,117.89999999999999 0 1 0 2379.97,1541.13 Z" fill="#262626"/>
<path d="M2297.42,1567.96 A204.7,204.7 0 0 1 2655.15,1380.94 L2644.95,1388.68 A191.89999999999998,191.89999999999998 0 0 0 2309.59,1564.00 Z" fill="#31a82c"/>
<path d="M2655.15,1380.94 A204.7,204.7 0 0 1 2696.30,1490.42 L2683.53,1491.31 A191.89999999999998,191.89999999999998 0 0 0 2644.95,1388.68 Z" fill="#d77527"/>
<path d="M2696.30,1490.42 A204.7,204.7 0 0 1 2686.78,1567.96 L2674.61,1564.00 A191.89999999999998,191.89999999999998 0 0 0 2683.53,1491.31 Z" fill="#df3434"/>
<path d="M2309.59,1564.00 A191.89999999999998,191.89999999999998 0 0 1 2421.77,1326.15 L2423.16,1329.69 A188.09999999999997,188.09999999999997 0 0 0 2313.21,1562.83 Z" fill="#1c1a1b"/>
<path d="M2313.21,1562.83 A188.1,188.1 0 0 1 2423.16,1329.69 L2448.89,1395.00 A117.89999999999999,117.89999999999999 0 0 0 2379.97,1541.13 Z" fill="#31a82c"/>
<text x="2392.0" y="1546.8" font-size="69.5" font-weight="700" fill="#d8d9da" stroke="#d8d9da" stroke-width="0.8" textLength="196" lengthAdjust="spacingAndGlyphs">44.2%</text>
</svg>
</body></html>
